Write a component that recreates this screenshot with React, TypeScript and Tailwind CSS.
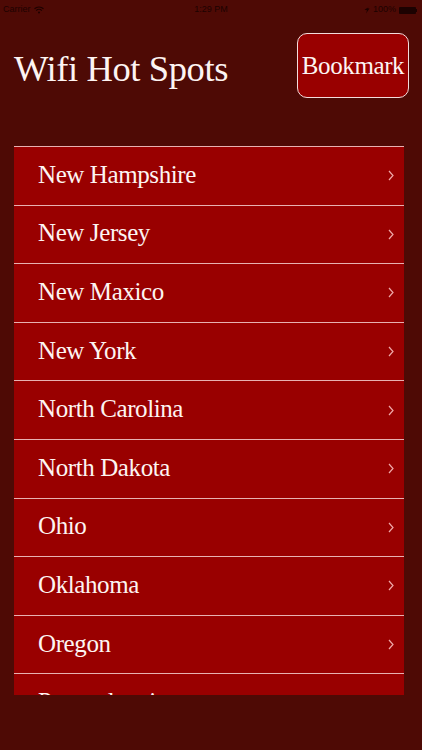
import React from 'react';

const states = [
  'New Hampshire',
  'New Jersey',
  'New Maxico',
  'New York',
  'North Carolina',
  'North Dakota',
  'Ohio',
  'Oklahoma',
  'Oregon',
  'Pennsylvania',
];

const serif = { fontFamily: '"Liberation Serif", "Times New Roman", serif' };

function StatusBar() {
  return (
    <div
      className="h-5 px-[3px] flex items-center justify-between text-[9px] text-[#1c0201]"
      style={{ fontFamily: '"Liberation Sans", Arial, sans-serif' }}
    >
      <div className="flex items-center gap-[3px] w-[100px]">
        <span>Carrier</span>
        <svg width="10" height="8" viewBox="0 0 10 8">
          <path d="M0.5 2.8 A6.5 6.5 0 0 1 9.5 2.8" stroke="#1c0201" strokeWidth="1.2" fill="none" />
          <path d="M2.2 4.6 A4 4 0 0 1 7.8 4.6" stroke="#1c0201" strokeWidth="1.2" fill="none" />
          <circle cx="5" cy="6.6" r="1" fill="#1c0201" />
        </svg>
      </div>
      <span>1:29 PM</span>
      <div className="flex items-center justify-end gap-[3px] w-[100px] pr-[2px]">
        <svg width="6" height="8" viewBox="0 0 6 8">
          <path d="M5.5 0.5 L0.5 3.8 L3 4.2 L2 7.5 L5.5 2.5 L3.2 2.3 Z" fill="#1c0201" />
        </svg>
        <span>100%</span>
        <div className="flex items-center">
          <div className="w-[17px] h-[7px] rounded-[1px] bg-[#1c0201]" />
          <div className="w-[1px] h-[3px] bg-[#1c0201]" />
        </div>
      </div>
    </div>
  );
}

export default function App() {
  return (
    <div className="w-full h-[750px] bg-[#4e0a05] flex flex-col overflow-hidden">
      <StatusBar />

      <div className="flex items-start justify-between pl-[14px] pr-[13px] pt-[13px]">
        <h1
          className="mt-[18px] text-[36.5px] leading-none tracking-[-0.4px] text-[#fdf4f2]"
          style={serif}
        >
          Wifi Hot Spots
        </h1>
        <button
          className="w-[112px] h-[65px] rounded-[10px] border-[1.5px] border-[#f3dcdc] bg-[#990000] text-[25px] leading-none tracking-[-0.4px] text-[#fdf4f2] flex items-center justify-center"
          style={serif}
        >
          Bookmark
        </button>
      </div>

      <div className="mt-[48px] ml-[14px] w-[390px] h-[549px] overflow-hidden bg-[#990000]">
        {states.map((name) => (
          <div
            key={name}
            className="h-[58.6px] border-t-[1.5px] border-[#e7b1b1] flex items-center justify-between pl-[24px] pr-[10px]"
          >
            <span
              className="pb-[3px] text-[25px] leading-none tracking-[-0.4px] text-[#fdf4f2]"
              style={serif}
            >
              {name}
            </span>
            <svg width="6" height="11" viewBox="0 0 6 11">
              <path d="M1 1 L5 5.5 L1 10" stroke="#f0a9a9" strokeWidth="1.2" fill="none" />
            </svg>
          </div>
        ))}
      </div>
    </div>
  );
}
